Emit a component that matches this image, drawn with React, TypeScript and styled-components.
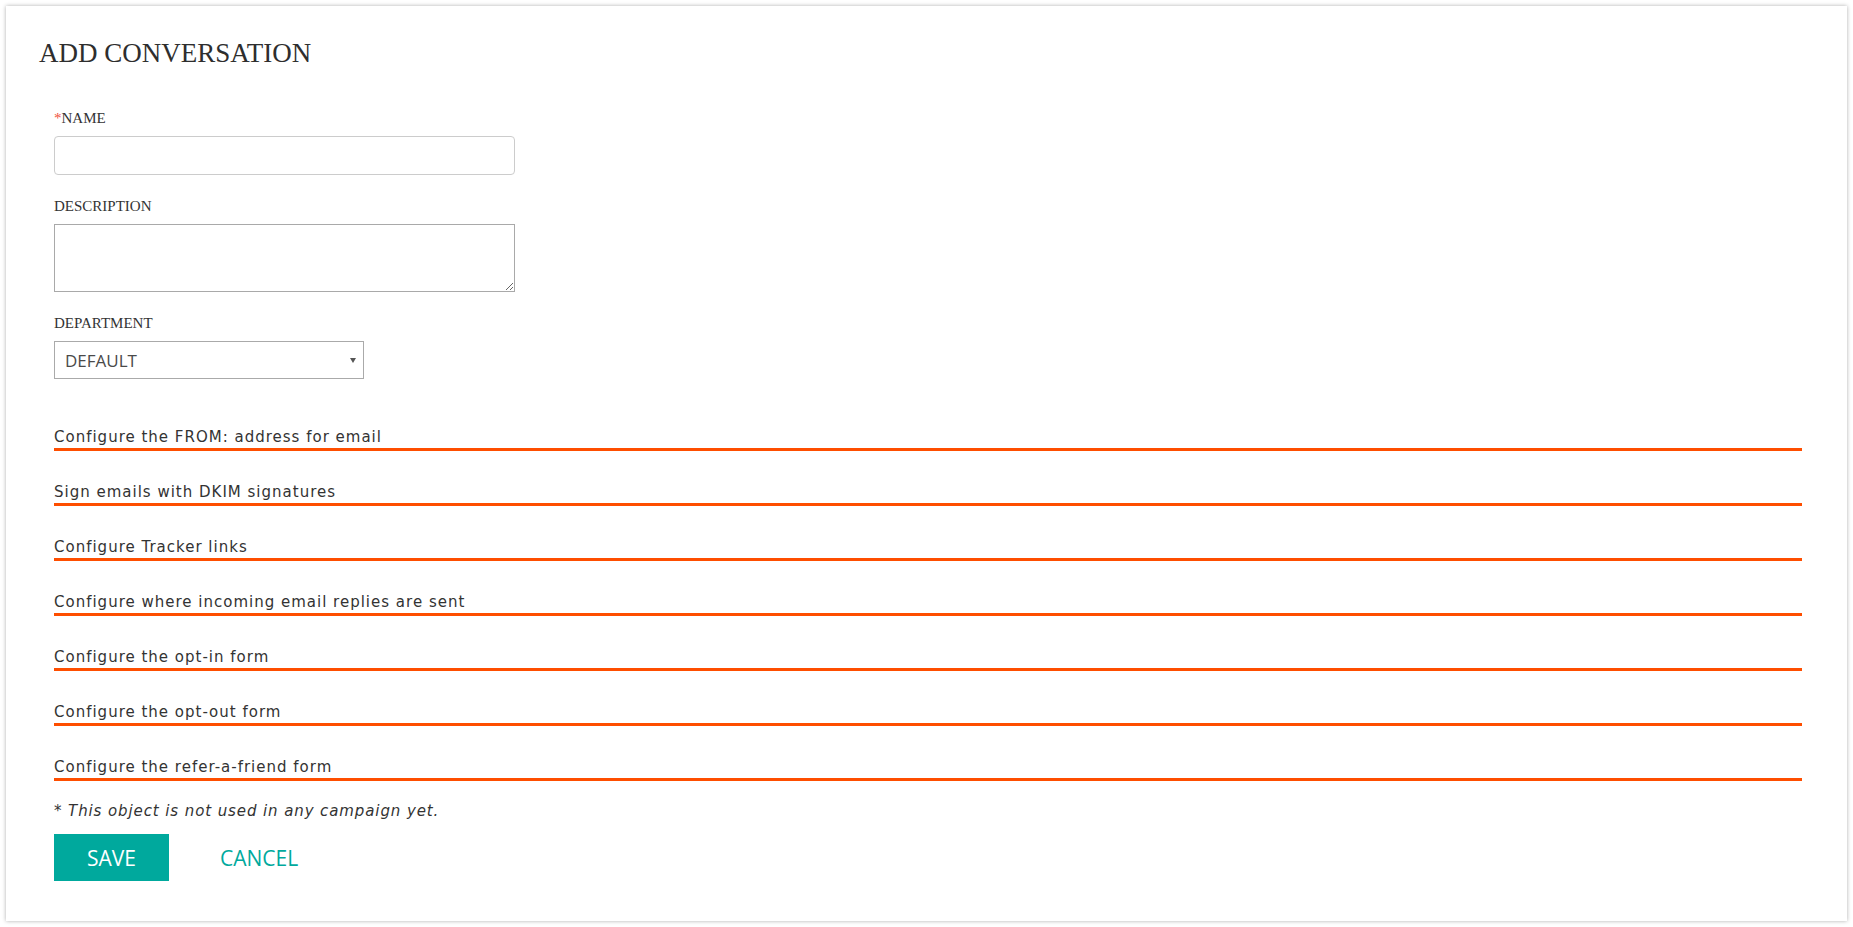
import React from "react";
import styled, { createGlobalStyle } from "styled-components";

const GlobalStyle = createGlobalStyle`
  html, body {
    margin: 0;
    padding: 0;
    background: #ffffff;
  }
  body {
    font-family: "DejaVu Sans", sans-serif;
    color: #333333;
  }
  * {
    box-sizing: border-box;
  }
`;

const Page = styled.div`
  padding: 6px 6px 7px 6px;
`;

const Card = styled.div`
  background: #ffffff;
  box-shadow: 0 0 4px rgba(0, 0, 0, 0.32);
  padding: 31px 32px 40px 33px;
`;

const Title = styled.h1`
  margin: 0;
  font-family: "Liberation Serif", "Times New Roman", serif;
  font-weight: normal;
  font-size: 27px;
  line-height: 32px;
  color: #2e2e2e;
`;

const Form = styled.form`
  margin-top: 40px;
  padding: 0 13px 0 15px;
`;

const Field = styled.div<{ $first?: boolean }>`
  margin-top: ${(p) => (p.$first ? "0" : "22px")};
`;

const Label = styled.label`
  display: block;
  font-family: "Liberation Serif", "Times New Roman", serif;
  font-size: 15px;
  line-height: 18px;
  color: #333333;
  margin-bottom: 9px;
`;

const Required = styled.span`
  color: #f0503c;
`;

const TextInput = styled.input`
  display: block;
  width: 461px;
  height: 39px;
  border: 1px solid #cccccc;
  border-radius: 4px;
  background: #ffffff;
  padding: 0 10px;
  font-family: "Open Sans", sans-serif;
  font-size: 15px;
  outline: none;
`;

const TextArea = styled.textarea`
  display: block;
  width: 461px;
  height: 68px;
  border: 1px solid #a9a9a9;
  border-radius: 0;
  background: #ffffff;
  padding: 6px 10px;
  font-family: "Open Sans", sans-serif;
  font-size: 15px;
  outline: none;
`;

const SelectBox = styled.div`
  position: relative;
  width: 310px;
  height: 38px;
`;

const Select = styled.select`
  display: block;
  width: 100%;
  height: 100%;
  appearance: none;
  -webkit-appearance: none;
  border: 1px solid #aaaaaa;
  border-radius: 0;
  background: #ffffff;
  padding: 0 24px 0 10px;
  font-family: "Open Sans", sans-serif;
  font-size: 17px;
  color: #4a4a4a;
  outline: none;
`;

const Caret = styled.span`
  position: absolute;
  right: 8px;
  top: 17px;
  width: 0;
  height: 0;
  border-left: 3px solid transparent;
  border-right: 3px solid transparent;
  border-top: 5px solid #555555;
  pointer-events: none;
`;

const Sections = styled.div`
  display: flex;
  flex-direction: column;
  gap: 31px;
  margin-top: 48px;
`;

const Section = styled.div`
  font-size: 15px;
  line-height: 20px;
  letter-spacing: 1px;
  color: #333333;
  padding-bottom: 1px;
  border-bottom: 3px solid #fe4e00;
  cursor: pointer;
`;

const Note = styled.p`
  margin: 20px 0 0 0;
  font-size: 15px;
  line-height: 20px;
  letter-spacing: 0.9px;
  font-style: italic;
  color: #333333;
`;

const Actions = styled.div`
  display: flex;
  gap: 18px;
  margin-top: 13px;
`;

const Button = styled.button<{ $primary?: boolean }>`
  height: 47px;
  padding: 0 33px;
  border: none;
  border-radius: 0;
  font-family: "Open Sans", sans-serif;
  font-size: 21px;
  cursor: pointer;
  background: ${(p) => (p.$primary ? "#00a99d" : "transparent")};
  color: ${(p) => (p.$primary ? "#ffffff" : "#00a99d")};
`;

const sections = [
  "Configure the FROM: address for email",
  "Sign emails with DKIM signatures",
  "Configure Tracker links",
  "Configure where incoming email replies are sent",
  "Configure the opt-in form",
  "Configure the opt-out form",
  "Configure the refer-a-friend form",
];

export default function App() {
  return (
    <>
      <GlobalStyle />
      <Page>
        <Card>
          <Title>ADD CONVERSATION</Title>
          <Form onSubmit={(e) => e.preventDefault()}>
            <Field $first>
              <Label>
                <Required>*</Required>NAME
              </Label>
              <TextInput type="text" />
            </Field>
            <Field>
              <Label>DESCRIPTION</Label>
              <TextArea />
            </Field>
            <Field>
              <Label>DEPARTMENT</Label>
              <SelectBox>
                <Select defaultValue="default">
                  <option value="default">DEFAULT</option>
                </Select>
                <Caret />
              </SelectBox>
            </Field>
            <Sections>
              {sections.map((s) => (
                <Section key={s}>{s}</Section>
              ))}
            </Sections>
            <Note>* This object is not used in any campaign yet.</Note>
            <Actions>
              <Button $primary type="submit">SAVE</Button>
              <Button type="button">CANCEL</Button>
            </Actions>
          </Form>
        </Card>
      </Page>
    </>
  );
}
